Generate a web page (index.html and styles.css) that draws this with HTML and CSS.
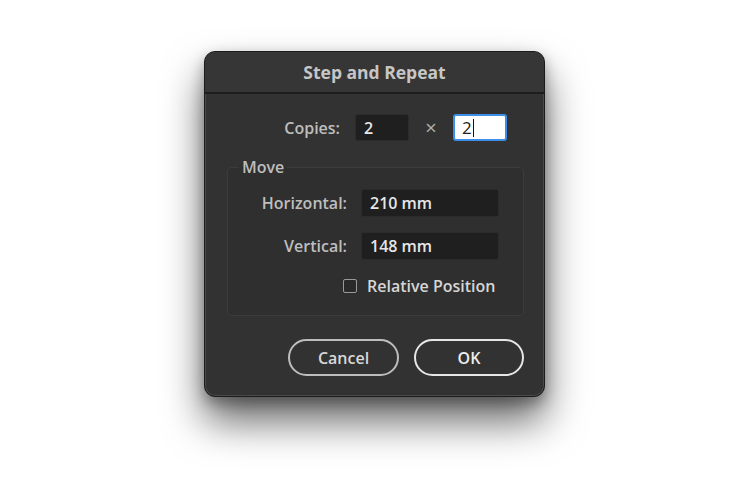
FILE: index.html
```html
<!DOCTYPE html>
<html>
<head>
<meta charset="utf-8">
<link rel="stylesheet" href="styles.css">
</head>
<body>
<div class="stage">
  <div class="dialog">
    <div class="titlebar">Step and Repeat</div>
    <div class="content">
      <div class="copies-row">
        <span class="lbl copies-lbl">Copies:</span>
        <div class="field small">2</div>
        <span class="times">×</span>
        <div class="field small focus">2<span class="caret"></span></div>
      </div>
      <fieldset class="group">
        <legend>Move</legend>
        <div class="row">
          <span class="lbl move-lbl">Horizontal:</span>
          <div class="field wide">210 mm</div>
        </div>
        <div class="row">
          <span class="lbl move-lbl">Vertical:</span>
          <div class="field wide">148 mm</div>
        </div>
        <div class="check-row">
          <span class="checkbox"></span>
          <span class="check-lbl">Relative Position</span>
        </div>
      </fieldset>
      <div class="buttons">
        <div class="btn">Cancel</div>
        <div class="btn ok">OK</div>
      </div>
    </div>
  </div>
</div>
</body>
</html>
```

FILE: styles.css
```css
html, body {
  margin: 0;
  padding: 0;
  background: #ffffff;
}
body {
  width: 750px;
  height: 500px;
  overflow: hidden;
  font-family: "Open Sans", "Noto Sans", sans-serif;
}
.stage {
  padding: 51px 0 0 204px;
}
.dialog {
  box-sizing: border-box;
  width: 341px;
  height: 346px;
  background: #323232;
  border: 1px solid #1c1c1c;
  border-radius: 11px;
  box-shadow: inset 0 0 0 1px #4a4a4a, 0 24px 40px rgba(0,0,0,0.6), 0 6px 14px rgba(0,0,0,0.3);
  overflow: hidden;
}
.titlebar {
  height: 40px;
  line-height: 40px;
  text-align: center;
  font-weight: 700;
  font-size: 17.5px;
  color: #c6c6c6;
  background: #363636;
  border-bottom: 2px solid #1d1d1d;
}
.content {
  padding: 20px 21px 0 22px;
}
.lbl {
  color: #bebebe;
  font-size: 16px;
  text-align: right;
  font-weight: 600;
}
.copies-row {
  display: flex;
  align-items: center;
  height: 27px;
}
.copies-lbl {
  width: 113px;
  margin-right: 15px;
}
.field {
  box-sizing: border-box;
  background: #1f1f1f;
  border: 1px solid #2b2b2b;
  border-radius: 3px;
  color: #e6e6e6;
  font-size: 16px;
  font-weight: 600;
  padding-left: 8px;
  display: flex;
  align-items: center;
}
.field.small {
  width: 54px;
  height: 27px;
}
.times {
  width: 44px;
  text-align: center;
  color: #b0b0b0;
  font-size: 20px;
}
.field.focus {
  background: #ffffff;
  border: 2px solid #3d8ee8;
  color: #222;
  padding-left: 7px;
  font-weight: 400;
  font-size: 17px;
}
.caret {
  display: inline-block;
  width: 1.5px;
  height: 18px;
  background: #111;
  margin-left: 1px;
}
.group {
  box-sizing: border-box;
  width: 297px;
  height: 158px;
  margin: 17px 0 0 0;
  padding: 0;
  border: 1px solid #3c3c3c;
  border-radius: 4px;
  background: #2f2f2f;
}
.group legend {
  color: #bebebe;
  font-size: 16px;
  font-weight: 600;
  padding: 0 3px;
  margin-left: 11px;
  line-height: 18px;
}
.row {
  display: flex;
  align-items: center;
  margin-top: 13px;
}
.row + .row {
  margin-top: 15px;
}
.move-lbl {
  width: 119px;
  margin-right: 14px;
}
.field.wide {
  width: 138px;
  height: 28px;
}
.check-row {
  display: flex;
  align-items: center;
  margin: 15px 0 0 115px;
}
.checkbox {
  box-sizing: border-box;
  width: 14px;
  height: 14px;
  border: 1px solid #9a9a9a;
  border-radius: 2px;
  background: #2a2a2a;
  margin-right: 10px;
}
.check-lbl {
  color: #d6d6d6;
  font-size: 16px;
  font-weight: 600;
}
.buttons {
  display: flex;
  justify-content: flex-end;
  gap: 15px;
  width: 297px;
  margin-top: 23px;
}
.btn {
  box-sizing: border-box;
  width: 111px;
  height: 37px;
  border: 2px solid #bdbdbd;
  border-radius: 19px;
  color: #d8d8d8;
  font-size: 16px;
  font-weight: 600;
  display: flex;
  align-items: center;
  justify-content: center;
}
.btn.ok {
  width: 110px;
  border-color: #e6e6e6;
  color: #ececec;
}
```
